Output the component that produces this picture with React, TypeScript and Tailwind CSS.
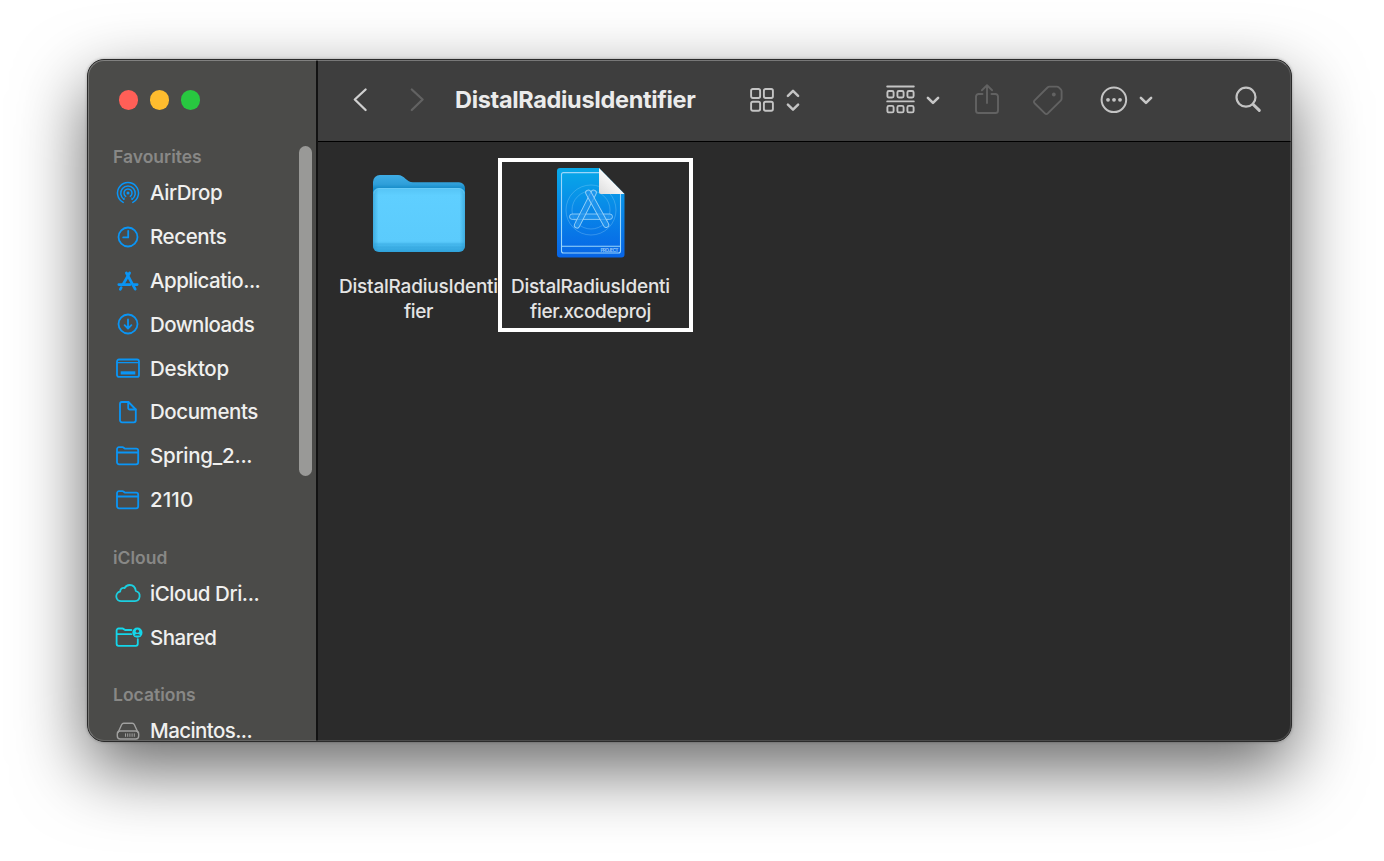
import type { ReactNode } from "react";

const BLUE = "#0a95f5";
const CYAN = "#1ccfe0";

function Icon({ children, color = BLUE, w = 30, h = 30, sw = 1.8 }: { children: ReactNode; color?: string; w?: number; h?: number; sw?: number }) {
  return (
    <svg width={w} height={h} viewBox={`0 0 ${w} ${h}`} fill="none" stroke={color} strokeWidth={sw} strokeLinecap="round" strokeLinejoin="round" className="block shrink-0">
      {children}
    </svg>
  );
}

const airdrop = (
  <Icon sw={1.5}>
    <circle cx="15" cy="15" r="1.5" fill={BLUE} stroke="none" />
    <path d="M12.7 18.3a4 4 0 1 1 4.6 0" />
    <path d="M11 21.3a7.3 7.3 0 1 1 8 0" />
    <path d="M10.2 24.4a10.5 10.5 0 1 1 9.6 0" />
    <path d="M11.6 19.8l-1 1.7M18.4 19.8l1 1.7" strokeWidth="0.8" />
  </Icon>
);
const recents = (
  <Icon>
    <circle cx="15" cy="15" r="9.5" />
    <path d="M15.2 8.8V15.4H10.2" />
  </Icon>
);
const applications = (
  <Icon sw={2.7}>
    <path d="M16.6 7L10 18.5M13.4 7L22.2 23.2" />
    <path d="M5.8 18.6h11.4M21 18.6H24.2" />
    <path d="M8.2 21.7l-.9 1.6" />
  </Icon>
);
const downloads = (
  <Icon>
    <circle cx="15" cy="15" r="9.5" />
    <path d="M15 10.3v9M11.6 16.2l3.4 3.3 3.4-3.3" />
  </Icon>
);
const desktop = (
  <Icon>
    <rect x="4" y="6.5" width="22" height="17.4" rx="2" />
    <path d="M4.4 9.6h21.2" strokeWidth="1.3" />
    <path d="M7.7 19.9h14.6" strokeWidth="3.2" strokeLinecap="butt" />
  </Icon>
);
const documents = (
  <Icon>
    <path d="M8.8 5h6.7l7.3 7.5v10.8a2 2 0 0 1-2 2H9a2 2 0 0 1-2-2V7a2 2 0 0 1 1.8-2z" />
    <path d="M15.2 5.2v5.8a1.5 1.5 0 0 0 1.5 1.5h6" />
  </Icon>
);
const folder = (
  <Icon>
    <path d="M4 21V8.2a2 2 0 0 1 2-2h3.4c1.4 0 1.9 1.5 3.2 1.5H23.2a2 2 0 0 1 2 2V21.3a2 2 0 0 1-2 2H6a2 2 0 0 1-2-2z" />
    <path d="M4.4 11.5h20.4" />
  </Icon>
);
const cloud = (
  <Icon color={CYAN}>
    <path d="M8.3 23.2h13.6a5.2 5.2 0 0 0 .9-10.2C22.3 9.1 19.8 7 16.7 7c-2.4 0-4.1 1.1-5.1 3.1-2.3-.6-4.4.7-4.4 3.4a4.9 4.9 0 0 0 1.1 9.7z" />
  </Icon>
);
const shared = (
  <Icon color="#14d6ea">
    <path d="M18.4 8h-6c-1.3 0-1.6-1.5-3-1.5H5.6a2 2 0 0 0-2 2V21.8a2 2 0 0 0 2 2H22.8a2 2 0 0 0 2-2V17.2" />
    <path d="M4 12.2h14.2" />
    <circle cx="24.4" cy="10.7" r="5.1" fill="#14d6ea" stroke="none" />
    <circle cx="24.4" cy="9.2" r="1.6" fill="#4b4b49" stroke="none" />
    <path d="M21.5 13.6a3.1 2.3 0 0 1 5.8 0z" fill="#4b4b49" stroke="none" />
  </Icon>
);
const disk = (
  <Icon color="#a0a09f" sw={1.4}>
    <path d="M5.2 16.2L8.6 8.8a2.5 2.5 0 0 1 2.2-1.5h8.4a2.5 2.5 0 0 1 2.2 1.5l3.4 7.4" />
    <rect x="4.300" y="15" width="21.400" height="8" rx="3" />
    <path d="M12.500 17.800v2.600M14.700 17.800v2.600M16.900 17.800v2.600M19.100 17.800v2.600M21.300 17.800v2.600" strokeWidth="1" />
  </Icon>
);

function Section({ children, label }: { children: ReactNode; label: string }) {
  return (
    <section className="mb-[20.8px]">
      <h2 className="flex h-[29.2px] items-center pl-[25px] text-[17.5px] font-semibold text-[#888886]">{label}</h2>
      <ul>{children}</ul>
    </section>
  );
}

function Row({ icon, label, fit }: { icon: ReactNode; label: string; fit: string }) {
  return (
    <li className="flex h-[43.8px] items-center pl-[25px] text-[#f0f0ef]">
      <span className="pb-[1.5px]">{icon}</span>
      <span className={`ml-[7px] whitespace-nowrap text-[20.5px] font-[450] ${fit}`}>{label}</span>
    </li>
  );
}

function Chevron() {
  return (
    <svg width="14" height="10" viewBox="0 0 14 10" fill="none" stroke="#c6c6c6" strokeWidth="2.6" strokeLinecap="round" strokeLinejoin="round">
      <path d="M1.9 2.800L7 7.900l5.100-5.100" />
    </svg>
  );
}

function Toolbar() {
  const c = "#c4c4c4";
  const dim = "#626262";
  return (
    <header className="flex h-[82px] shrink-0 items-center border-b border-black bg-[#3e3e3e] pb-px">
      <div className="ml-[34px]"><Icon w={16} h={26} color="#d0d0d0" sw={2.3}><path d="M13.6 2.500L2.800 12.500l10.800 10.500" /></Icon></div>
      <div className="ml-[41px]"><Icon w={16} h={26} color={dim} sw={2.3}><path d="M2.800 2.500l10.800 10L2.800 23" /></Icon></div>
      <h1 className="ml-[30px] w-[294.500px] whitespace-nowrap text-[23.500px] font-bold tracking-[-0.330px] text-[#ebebeb]">DistalRadiusIdentifier</h1>
      <Icon w={24} h={26} color={c} sw={1.9}>
        <rect x="1.100" y="2" width="9" height="9" rx="1.700" /><rect x="13.900" y="2" width="9" height="9" rx="1.700" />
        <rect x="1.100" y="14.800" width="9" height="9" rx="1.700" /><rect x="13.900" y="14.800" width="9" height="9" rx="1.700" />
      </Icon>
      <div className="ml-[12px]"><Icon w={14} h={26} color={c} sw={2.500}><path d="M1.900 8.800L7 3.800l5.100 5M1.900 17.700l5.100 5 5.100-5" /></Icon></div>
      <div className="ml-[86px]">
        <Icon w={29} h={30} color={c} sw={1.900}>
          <path d="M1.200 1.500h26.600M1.200 16.400h26.600" />
          {[1.400, 11.400, 21.400].map((x) => <rect key={x} x={x} y="6" width="6.200" height="6.500" rx="1.500" />)}
          {[1.400, 11.400, 21.400].map((x) => <rect key={x} x={x} y="20.900" width="6.200" height="6.500" rx="1.500" />)}
        </Icon>
      </div>
      <div className="ml-[11px]"><Chevron /></div>
      <div className="ml-[34.500px]">
        <Icon w={26} h={34} color={dim} sw={1.900}>
          <path d="M8.500 11H4.600A2.600 2.600 0 0 0 2 13.600v13.800a2.600 2.600 0 0 0 2.600 2.600h16.800a2.600 2.600 0 0 0 2.600-2.600V13.600A2.600 2.600 0 0 0 21.400 11h-3.900" />
          <path d="M13 20V2.500M7.900 7.300L13 2.300l5.100 5" />
        </Icon>
      </div>
      <div className="ml-[32px]">
        <Icon w={32} h={32} color={dim} sw={1.900}>
          <path d="M2.600 16.400L15.500 3.500c.6-.6 1.200-.9 2.100-.9h7.200c.8 0 1.400.2 2 .8l2 2c.6.600.800 1.200.800 2v7.200c0 .9-.3 1.500-.9 2.100L15.800 29.400c-.9.900-2 .9-2.900 0L2.600 19.300c-.9-.9-.9-2 0-2.900z" />
          <circle cx="21.800" cy="10.500" r="1.900" fill={dim} stroke="none" />
        </Icon>
      </div>
      <div className="ml-[35.500px]">
        <Icon w={28} h={30} color={c} sw={2}>
          <circle cx="13.900" cy="14.800" r="12.300" />
          <g fill={c} stroke="none"><circle cx="8" cy="14.800" r="1.900" /><circle cx="14" cy="14.800" r="1.900" /><circle cx="20" cy="14.800" r="1.900" /></g>
        </Icon>
      </div>
      <div className="ml-[11px]"><Chevron /></div>
      <div className="ml-[81.500px]">
        <Icon w={30} h={30} color={c} sw={2.200}>
          <circle cx="12" cy="12.200" r="9.500" />
          <path d="M19 19.200l6.300 6.200" strokeWidth="3" />
        </Icon>
      </div>
    </header>
  );
}

function FolderArt() {
  return (
    <svg width="98" height="84" viewBox="0 0 98 84">
      <defs>
        <linearGradient id="fb" x1="0" y1="0" x2="0" y2="1"><stop offset="0" stopColor="#3fade5" /><stop offset=".25" stopColor="#2f9fd9" /><stop offset=".38" stopColor="#1189c6" /><stop offset="1" stopColor="#1690ce" /></linearGradient>
        <linearGradient id="ff" x1="0" y1="0" x2="0" y2="1"><stop offset="0" stopColor="#56c4f5" /><stop offset=".12" stopColor="#5fcfff" /><stop offset=".83" stopColor="#5bcbfc" /><stop offset=".89" stopColor="#45b8ed" /><stop offset="1" stopColor="#2fa2da" /></linearGradient>
        <linearGradient id="fs" x1="0" y1="0" x2="1" y2="0"><stop offset="0" stopColor="#2793c8" stopOpacity=".55" /><stop offset=".06" stopColor="#2793c8" stopOpacity="0" /><stop offset=".94" stopColor="#2793c8" stopOpacity="0" /><stop offset="1" stopColor="#2793c8" stopOpacity=".55" /></linearGradient>
      </defs>
      <path d="M3 10a7 7 0 0 1 7-7h18c6.500 0 8.500 7.300 15 7.300H89a6 6 0 0 1 6 6V40H3z" fill="url(#fb)" />
      <rect x="3" y="16" width="92" height="64" rx="6" fill="url(#ff)" />
      <rect x="3" y="16" width="92" height="64" rx="6" fill="url(#fs)" />
      <path d="M4 21.500a5 5 0 0 1 5-5h80a5 5 0 0 1 5 5" fill="none" stroke="#86d7fb" strokeWidth=".4" />
      <path d="M4 72h90M4 75h90" stroke="#2b9cd2" strokeOpacity=".35" strokeWidth=".8" />
    </svg>
  );
}

function ProjectArt() {
  return (
    <svg width="72" height="94" viewBox="0 0 72 94">
      <defs>
        <linearGradient id="pb" x1="0" y1="0" x2="0" y2="1"><stop offset="0" stopColor="#08a9e8" /><stop offset=".5" stopColor="#0886e8" /><stop offset="1" stopColor="#0764e6" /></linearGradient>
        <linearGradient id="pf" x1="0" y1="1" x2=".6" y2=".3"><stop offset="0" stopColor="#dcdcdc" /><stop offset="1" stopColor="#ffffff" /></linearGradient>
      </defs>
      <path d="M5 2H44L69.500 28V88.500a3 3 0 0 1-3 3H5a3 3 0 0 1-3-3V5a3 3 0 0 1 3-3z" fill="url(#pb)" />
      <g fill="none" stroke="#9bd6fa">
        <path d="M44 6.600H8.500a2 2 0 0 0-2 2v76.400a2 2 0 0 0 2 2h55a2 2 0 0 0 2-2V27M6.500 80.200h59" strokeWidth="1.100" />
        <circle cx="36" cy="44" r="25" strokeOpacity=".3" />
        <circle cx="36" cy="44" r="19" strokeOpacity=".3" />
      </g>
      <g fill="#2595ee" fillOpacity=".7" stroke="#a9dafa" strokeOpacity=".85" strokeWidth=".9">
        <rect x="14.500" y="48" width="43" height="5.400" rx="2.700" />
        <rect x="-2.700" y="-3" width="5.400" height="42" rx="2.700" transform="translate(38.500 27) rotate(27)" />
        <rect x="-2.700" y="-3" width="5.400" height="42" rx="2.700" transform="translate(33.500 27) rotate(-29)" />
      </g>
      <text x="63.500" y="85.600" textAnchor="end" fill="#8cc2f8" fontFamily="Inter, sans-serif" fontSize="4.800" fontWeight="700" textLength="18">PROJECT</text>
      <path d="M44 2L69.500 28H46a2 2 0 0 1-2-2z" fill="url(#pf)" />
    </svg>
  );
}

function FileItem({ art, lines, fit }: { art: ReactNode; lines: string[]; fit: string[] }) {
  return (
    <figure className="flex w-[172px] shrink-0 flex-col items-center">
      <div className="flex h-[98px] items-center justify-center">{art}</div>
      <figcaption className="mt-[12px] flex flex-col items-center text-[19px] leading-[25.300px] font-[450] text-[#e4e4e4]">
        {lines.map((l, i) => <span key={l} className={`whitespace-nowrap ${fit[i]}`}>{l}</span>)}
      </figcaption>
    </figure>
  );
}

export default function App() {
  return (
    <div className="h-[861px] w-[1384px] overflow-hidden bg-white pt-[59px] pl-[87px] font-['Inter',sans-serif]">
      <div className="relative h-[683px] w-[1205px] rounded-[17px] shadow-[0_27px_70px_rgba(0,0,0,0.6),0_0_3px_rgba(0,0,0,0.3)]">
        <div className="flex h-full w-full overflow-hidden rounded-[17px] border border-[#2a2a2a] bg-[#2b2b2b]">
          <aside className="flex w-[230px] shrink-0 border-r-2 border-[#121212] bg-[#4b4b49]">
            <div className="flex w-[210px] shrink-0 flex-col">
              <div className="flex h-[80px] shrink-0 items-center gap-[12px] pl-[30.500px]">
                <span className="size-[19.300px] rounded-full bg-[#ff5f57]" />
                <span className="size-[19.300px] rounded-full bg-[#febc2e]" />
                <span className="size-[19.300px] rounded-full bg-[#28c840]" />
              </div>
              <div className="flex flex-col pt-[2.700px]">
                <Section label="Favourites">
                  <Row icon={airdrop} label="AirDrop" fit="tracking-[-0.450px]" />
                  <Row icon={recents} label="Recents" fit="tracking-[-0.400px]" />
                  <Row icon={applications} label="Applicatio..." fit="tracking-[-0.520px]" />
                  <Row icon={downloads} label="Downloads" fit="tracking-[-0.570px]" />
                  <Row icon={desktop} label="Desktop" fit="tracking-[-0.350px]" />
                  <Row icon={documents} label="Documents" fit="tracking-[-0.430px]" />
                  <Row icon={folder} label="Spring_2..." fit="tracking-[-0.250px]" />
                  <Row icon={folder} label="2110" fit="tracking-[0.100px]" />
                </Section>
                <Section label="iCloud">
                  <Row icon={cloud} label="iCloud Dri..." fit="tracking-[-0.450px]" />
                  <Row icon={shared} label="Shared" fit="tracking-[-0.500px]" />
                </Section>
                <Section label="Locations">
                  <Row icon={disk} label="Macintos..." fit="tracking-[-0.580px]" />
                </Section>
              </div>
            </div>
            <div className="mt-[86px] ml-[0.500px] h-[330px] w-[13px] rounded-full bg-[#999997]" />
          </aside>
          <main className="flex min-w-0 grow flex-col">
            <Toolbar />
            <div className="flex pt-[22px] pl-[14.500px]">
              <FileItem art={<div className="pt-[2px]"><FolderArt /></div>} lines={["DistalRadiusIdenti", "fier"]} fit={["tracking-[-0.220px]", "tracking-[-0.350px]"]} />
              <FileItem art={<ProjectArt />} lines={["DistalRadiusIdenti", "fier.xcodeproj"]} fit={["tracking-[-0.220px]", "tracking-[-0.350px]"]} />
            </div>
          </main>
        </div>
        <div className="pointer-events-none absolute inset-px rounded-[16px] border border-white/15 border-t-white/30 border-l-white/25" />
        <div className="pointer-events-none absolute top-[99px] left-[410.500px] h-[174px] w-[195.500px] border-4 border-white" />
      </div>
    </div>
  );
}
